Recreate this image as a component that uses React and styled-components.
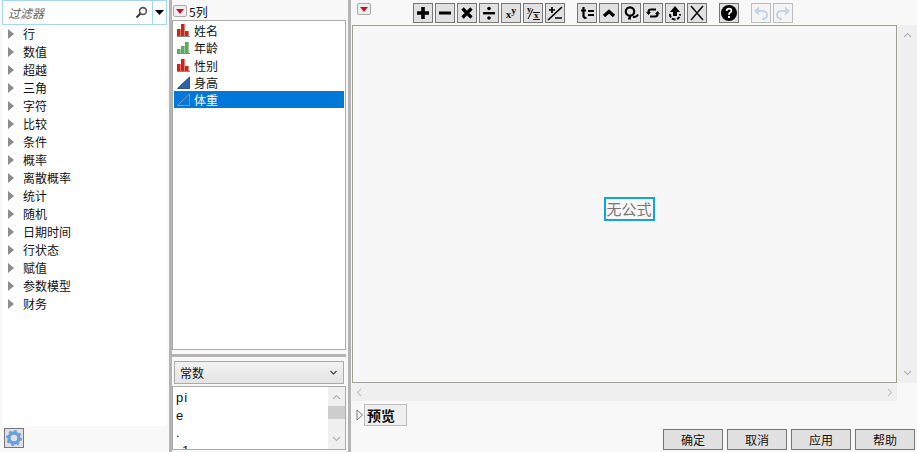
import React from 'react'
import styled, { createGlobalStyle } from 'styled-components'

const Global = createGlobalStyle`
  html, body { margin: 0; padding: 0; background: #f8f8f8; overflow: hidden; }
  * { box-sizing: border-box; }
  body { font-family: "Noto Sans CJK SC", "Liberation Sans", sans-serif; font-size: 12px; color: #111; }
`

const Page = styled.div`
  width: 917px;
  height: 452px;
  display: flex;
  overflow: hidden;
`

const Left = styled.div`
  width: 169px;
  flex: none;
  padding-left: 2px;
  display: flex;
  flex-direction: column;
`

const Divider = styled.div`
  width: 3px;
  flex: none;
  background: #b4b4b4;
`

const FilterBar = styled.div`
  height: 25px;
  width: 165px;
  flex: none;
  display: flex;
  align-items: center;
  background: #fff;
  border: 1px solid #a5d7f2;
`

const FilterInput = styled.div`
  flex: 1;
  height: 100%;
  padding-left: 5px;
  display: flex;
  align-items: center;
  justify-content: space-between;
  padding-right: 4px;
  font-style: italic;
  color: #666;
  border-right: 1px solid #a5d7f2;
`

const FilterDrop = styled.div`
  width: 13px;
  display: flex;
  justify-content: center;
`

const Tree = styled.div`
  flex: 1;
  width: 165px;
  background: #fff;
`

const TreeRow = styled.div`
  height: 18px;
  display: flex;
  align-items: center;
  gap: 9px;
  padding-left: 6px;
  line-height: 18px;
`

const Arrow = styled.span`
  width: 0;
  height: 0;
  border-left: 6px solid #8c8c8c;
  border-top: 5px solid transparent;
  border-bottom: 5px solid transparent;
`

const Footer = styled.div`
  height: 26px;
  flex: none;
  padding: 2px 0 0 2px;
`

const GearButton = styled.div`
  width: 20px;
  height: 20px;
  background: #e0e0e0;
  border: 1px solid #777;
  display: flex;
  align-items: center;
  justify-content: center;
`

const Middle = styled.div`
  width: 176px;
  flex: none;
  display: flex;
  flex-direction: column;
`

const ColHeader = styled.div`
  height: 20px;
  flex: none;
  display: flex;
  align-items: center;
  gap: 2px;
  padding: 2px 0 0 1px;
`

const MenuButton = styled.div`
  width: 14px;
  height: 12px;
  background: #eee;
  border: 1px solid #aaa;
  border-radius: 2px;
  display: flex;
  align-items: center;
  justify-content: center;
  &::after {
    content: '';
    border-top: 5px solid #c8102e;
    border-left: 4px solid transparent;
    border-right: 4px solid transparent;
  }
`

const ColList = styled.div`
  height: 330px;
  width: 174px;
  flex: none;
  background: #fff;
  border: 1px solid #aaa;
  padding: 1px;
`

const ColRow = styled.div`
  height: 17.25px;
  display: flex;
  align-items: center;
  gap: 4px;
  padding-left: 3px;
  background: ${({ $selected }) => ($selected ? '#0078d7' : 'transparent')};
  color: ${({ $selected }) => ($selected ? '#fff' : '#111')};
`

const Splitter = styled.div`
  height: 3px;
  width: 174px;
  flex: none;
  margin-top: 4px;
  background: #b4b4b4;
`

const Select = styled.div`
  width: 170px;
  height: 23px;
  flex: none;
  margin: 4px 0 2px 2px;
  padding: 0 6px 0 5px;
  display: flex;
  align-items: center;
  justify-content: space-between;
  border: 1px solid #aaa;
  background: linear-gradient(#f2f2f2, #e4e4e4);
`

const ConstBox = styled.div`
  width: 174px;
  height: 64px;
  flex: none;
  display: flex;
  background: #fff;
  border: 1px solid #aaa;
  overflow: hidden;
`

const ConstList = styled.div`
  flex: 1;
  padding: 2px 0 0 3px;
  font-family: "Liberation Sans", sans-serif;
  font-size: 13px;
`

const ConstRow = styled.div`
  height: 17.5px;
  line-height: 17px;
  letter-spacing: 1px;
  padding-left: ${({ $indent }) => $indent || 0}px;
`

const VScroll = styled.div`
  width: ${({ $w }) => $w}px;
  flex: none;
  display: flex;
  flex-direction: column;
  align-items: center;
  justify-content: space-between;
  background: #f0f0f0;
  padding: 7px 0;
`

const Thumb = styled.div`
  width: 100%;
  height: 13px;
  background: #cdcdcd;
  margin-bottom: 11px;
`

const Right = styled.div`
  flex: 1;
  display: flex;
  flex-direction: column;
  min-width: 0;
`

const Toolbar = styled.div`
  height: 25px;
  flex: none;
  display: flex;
  align-items: flex-start;
  padding: 3px 0 0 6px;
`

const TopMenu = styled(MenuButton)`
  margin-right: 42px;
`

const ToolGroup = styled.div`
  display: flex;
  gap: 2px;
  margin-right: ${({ $gap }) => $gap}px;
`

const ToolButton = styled.div`
  width: 20px;
  height: 20px;
  display: flex;
  align-items: center;
  justify-content: center;
  background: ${({ $off }) => ($off ? '#f4f4f4' : '#e1e1e1')};
  border: 1px solid ${({ $off }) => ($off ? '#bcbcbc' : '#777')};
`

const PowerBase = styled.span`
  font-family: "Liberation Serif", serif;
  font-weight: bold;
  font-size: 11px;
  line-height: 1;
  color: #111;
  margin-top: 3px;
`

const PowerExp = styled.span`
  font-family: "Liberation Serif", serif;
  font-weight: bold;
  font-size: 10px;
  line-height: 1;
  margin-top: -4px;
`

const CanvasRow = styled.div`
  height: 358px;
  flex: none;
  display: flex;
  padding-left: 1px;
`

const Canvas = styled.div`
  flex: 1;
  background: #f7f7f7;
  border: 1px solid #a0a090;
  padding: 9px 0 0 9px;
  display: flex;
  align-items: center;
  justify-content: center;
`

const EmptyFormula = styled.div`
  width: 51px;
  height: 24px;
  text-align: center;
  line-height: 20px;
  font-size: 15px;
  border: 2px solid #12a5d8;
  color: #777;
`

const HScroll = styled.div`
  height: 18px;
  flex: none;
  margin: 0 20px 0 1px;
  background: #f0f0f0;
  display: flex;
  align-items: center;
  justify-content: space-between;
  padding: 0 4px;
`

const PreviewRow = styled.div`
  height: 25px;
  flex: none;
  display: flex;
  align-items: center;
  padding: 3px 0 0 5px;
`

const OpenArrow = styled.span`
  width: 8px;
  height: 12px;
  display: flex;
`

const PreviewLabel = styled.div`
  width: 43px;
  height: 22px;
  line-height: 20px;
  padding-left: 2px;
  background: #efefef;
  border: 1px solid #bbb;
  font-weight: bold;
  font-size: 14px;
`

const Actions = styled.div`
  display: flex;
  justify-content: flex-end;
  gap: 4px;
  padding: 3px 2px 0 0;
`

const ActionButton = styled.button`
  width: 60px;
  height: 21px;
  padding: 0;
  font: inherit;
  color: #111;
  background: #e1e1e1;
  border: 1px solid #777;
`

const Bars = ({ color }) => (
  <svg width="13" height="13" viewBox="0 0 13 13">
    <rect x="0" y="5" width="3.6" height="7" fill={color} />
    <rect x="4" y="0" width="3.6" height="12" fill={color} />
    <rect x="8" y="7" width="3.6" height="5" fill={color} />
    <rect x="0" y="12" width="13" height="1" fill="#888" />
  </svg>
)

const Steps = () => (
  <svg width="13" height="13" viewBox="0 0 13 13">
    <rect x="0" y="8" width="3.6" height="4" fill="#5cab5c" />
    <rect x="4" y="5" width="3.6" height="7" fill="#5cab5c" />
    <rect x="8" y="1" width="3.6" height="11" fill="#5cab5c" />
    <rect x="0" y="12" width="13" height="1" fill="#888" />
  </svg>
)

const Ramp = ({ hollow }) => (
  <svg width="13" height="13" viewBox="0 0 13 13">
    <path
      d="M0.5 12.5 L12.5 1 V12.5 Z"
      fill={hollow ? 'none' : '#2f62ab'}
      stroke={hollow ? '#9a8f9f' : '#2a5596'}
    />
  </svg>
)

const Glyph = ({ d, w = 2.4 }) => (
  <svg width="16" height="16" viewBox="0 0 16 16">
    <path d={d} fill="none" stroke="#000" strokeWidth={w} />
  </svg>
)

const Chev = ({ d }) => (
  <svg width="9" height="6" viewBox="0 0 9 6">
    <path d={d} fill="none" stroke="#b4b4b4" strokeWidth="1.2" />
  </svg>
)

const tree = ['行', '数值', '超越', '三角', '字符', '比较', '条件', '概率', '离散概率', '统计', '随机', '日期时间', '行状态', '赋值', '参数模型', '财务']

const columns = [
  { name: '姓名', icon: <Bars color="#c8281a" /> },
  { name: '年龄', icon: <Steps /> },
  { name: '性别', icon: <Bars color="#c8281a" /> },
  { name: '身高', icon: <Ramp /> },
  { name: '体重', icon: <Ramp hollow />, selected: true },
]

export default function App() {
  return (
    <Page>
      <Global />
      <Left>
        <FilterBar>
          <FilterInput>
            过滤器
            <svg width="13" height="13" viewBox="0 0 13 13">
              <circle cx="8" cy="5" r="3.4" fill="none" stroke="#555" strokeWidth="1.6" />
              <path d="M5.5 7.5 L1.5 11.5" stroke="#333" strokeWidth="2" />
            </svg>
          </FilterInput>
          <FilterDrop>
            <svg width="9" height="5" viewBox="0 0 9 5"><path d="M0 0 H9 L4.5 5 Z" fill="#000" /></svg>
          </FilterDrop>
        </FilterBar>
        <Tree>
          {tree.map((t) => (
            <TreeRow key={t}><Arrow />{t}</TreeRow>
          ))}
        </Tree>
        <Footer>
          <GearButton>
            <svg width="16" height="16" viewBox="0 0 16 16">
              <circle cx="8" cy="8" r="5" fill="none" stroke="#6a9fdc" strokeWidth="3.4" />
              <circle cx="8" cy="8" r="7" fill="none" stroke="#6a9fdc" strokeWidth="2" strokeDasharray="2.6 2.9" />
            </svg>
          </GearButton>
        </Footer>
      </Left>
      <Divider />
      <Middle>
        <ColHeader><MenuButton />5列</ColHeader>
        <ColList>
          {columns.map((c) => (
            <ColRow key={c.name} $selected={c.selected}>{c.icon}{c.name}</ColRow>
          ))}
        </ColList>
        <Splitter />
        <Select>
          常数
          <svg width="7" height="5" viewBox="0 0 7 5"><path d="M0.5 1 L3.5 4 L6.5 1" fill="none" stroke="#444" strokeWidth="1.2" /></svg>
        </Select>
        <ConstBox>
          <ConstList>
            <ConstRow>pi</ConstRow>
            <ConstRow>e</ConstRow>
            <ConstRow>.</ConstRow>
            <ConstRow $indent={6}>1</ConstRow>
          </ConstList>
          <VScroll $w={17}>
            <Chev d="M1 5 L4.5 1.5 L8 5" />
            <Thumb />
            <Chev d="M1 1 L4.5 4.5 L8 1" />
          </VScroll>
        </ConstBox>
      </Middle>
      <Divider />
      <Right>
        <Toolbar>
          <TopMenu />
          <ToolGroup $gap={12}>
            <ToolButton><Glyph d="M8 2 V14 M2 8 H14" w={3.6} /></ToolButton>
            <ToolButton><Glyph d="M2 8 H14" w={3} /></ToolButton>
            <ToolButton><Glyph d="M3.5 3.5 L12.5 12.5 M12.5 3.5 L3.5 12.5" w={3.2} /></ToolButton>
            <ToolButton>
              <svg width="16" height="16" viewBox="0 0 16 16">
                <rect x="2" y="7" width="12" height="2.4" />
                <circle cx="8" cy="3.5" r="1.8" />
                <circle cx="8" cy="13" r="1.8" />
              </svg>
            </ToolButton>
            <ToolButton><PowerBase>x</PowerBase><PowerExp>y</PowerExp></ToolButton>
            <ToolButton>
              <svg width="16" height="16" viewBox="0 0 16 16" fontFamily="Liberation Serif" fontWeight="bold">
                <text x="2" y="7" fontSize="9">y</text>
                <text x="9" y="13" fontSize="9">x</text>
                <path d="M3 14 L8 4 M8 7.5 H15 M8 14.5 H15" fill="none" stroke="#000" strokeWidth="1" />
              </svg>
            </ToolButton>
            <ToolButton><Glyph d="M2 5 H8 M5 2 V8 M1 15 L15 2 M8 13 H15" w={1.7} /></ToolButton>
          </ToolGroup>
          <ToolGroup $gap={12}>
            <ToolButton>
              <svg width="16" height="16" viewBox="0 0 16 16">
                <path d="M4.5 2 V11 Q4.5 13 7.5 13 M2 5.5 H7 M9 6 H15 M9 10 H15" fill="none" stroke="#000" strokeWidth="2.2" />
              </svg>
            </ToolButton>
            <ToolButton><Glyph d="M3 11 L8 6.5 L13 11" w={3.2} /></ToolButton>
            <ToolButton>
              <svg width="16" height="16" viewBox="0 0 16 16">
                <circle cx="7" cy="6.5" r="4.2" fill="none" stroke="#000" strokeWidth="2.2" />
                <path d="M7 11 V13.5 H5 M10 11.5 Q13 13 15 9.5" fill="none" stroke="#000" strokeWidth="2" />
              </svg>
            </ToolButton>
            <ToolButton>
              <svg width="16" height="16" viewBox="0 0 16 16">
                <path d="M11 4.5 H6 Q3.5 4.5 3.5 7 M5 11.5 H10 Q12.5 11.5 12.5 9" fill="none" stroke="#000" strokeWidth="2.2" />
                <path d="M1 7 H6 L3.5 10 Z M10 9 H15 L12.5 6 Z" />
              </svg>
            </ToolButton>
            <ToolButton>
              <svg width="16" height="16" viewBox="0 0 16 16">
                <path d="M8 1 L13 7 H10 V11 H6 V7 H3 Z" />
                <path d="M3 9 Q3 14 8 14.5 Q13 14 13 9" fill="none" stroke="#000" strokeWidth="2" strokeDasharray="3.5 1.5" />
              </svg>
            </ToolButton>
            <ToolButton><Glyph d="M2 1 L14 15 M14 1 L2 15" w={1.4} /></ToolButton>
          </ToolGroup>
          <ToolGroup $gap={12}>
            <ToolButton>
              <svg width="16" height="16" viewBox="0 0 16 16">
                <circle cx="8" cy="8" r="8" />
                <path d="M5.6 6 Q5.8 3.6 8 3.6 Q10.4 3.6 10.4 5.8 Q10.4 7 8.9 7.8 Q8 8.3 8 9.8" fill="none" stroke="#fff" strokeWidth="1.8" />
                <rect x="7" y="11" width="2" height="2" fill="#fff" />
              </svg>
            </ToolButton>
          </ToolGroup>
          <ToolGroup $gap={0}>
            <ToolButton $off>
              <svg width="16" height="16" viewBox="0 0 16 16">
                <path d="M4 6 H10 Q14 6 14 10 Q14 14 9 14" fill="none" stroke="#c5d4e6" strokeWidth="2" />
                <path d="M6 1.5 V10.5 L1 6 Z" fill="#c5d4e6" />
              </svg>
            </ToolButton>
            <ToolButton $off>
              <svg width="16" height="16" viewBox="0 0 16 16">
                <path d="M12 6 H6 Q2 6 2 10 Q2 14 7 14" fill="none" stroke="#c5d4e6" strokeWidth="2" />
                <path d="M10 1.5 V10.5 L15 6 Z" fill="#c5d4e6" />
              </svg>
            </ToolButton>
          </ToolGroup>
        </Toolbar>
        <CanvasRow>
          <Canvas><EmptyFormula>无公式</EmptyFormula></Canvas>
          <VScroll $w={20}>
            <Chev d="M1 5 L4.5 1.5 L8 5" />
            <Chev d="M1 1 L4.5 4.5 L8 1" />
          </VScroll>
        </CanvasRow>
        <HScroll>
          <svg width="6" height="9" viewBox="0 0 6 9"><path d="M5 1 L1.5 4.5 L5 8" fill="none" stroke="#c8c8c8" strokeWidth="1.2" /></svg>
          <svg width="6" height="9" viewBox="0 0 6 9"><path d="M1 1 L4.5 4.5 L1 8" fill="none" stroke="#c8c8c8" strokeWidth="1.2" /></svg>
        </HScroll>
        <PreviewRow>
          <OpenArrow>
            <svg width="8" height="12" viewBox="0 0 8 12"><path d="M1 1 L6.5 6 L1 11 Z" fill="#fff" stroke="#777" /></svg>
          </OpenArrow>
          <PreviewLabel>预览</PreviewLabel>
        </PreviewRow>
        <Actions>
          <ActionButton>确定</ActionButton>
          <ActionButton>取消</ActionButton>
          <ActionButton>应用</ActionButton>
          <ActionButton>帮助</ActionButton>
        </Actions>
      </Right>
    </Page>
  )
}
